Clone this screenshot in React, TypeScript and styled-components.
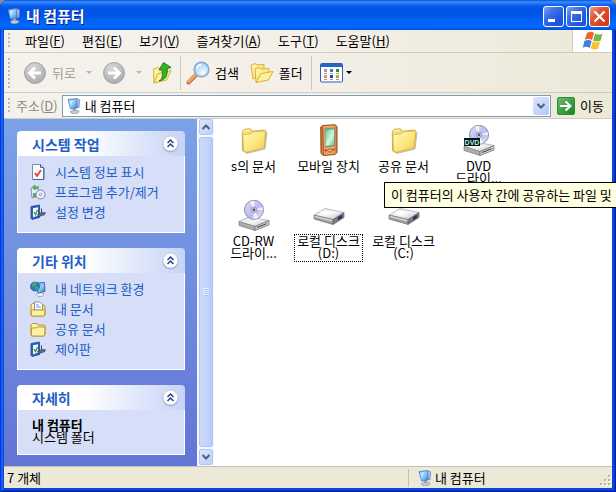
import React from "react";
import styled, { createGlobalStyle, css } from "styled-components";

const GlobalStyle = createGlobalStyle`
  *, *::before, *::after { box-sizing: border-box; }
  html, body { margin: 0; height: 100%; overflow: hidden; background: #8b9098; }
  #root { height: 100%; }
  body, button, input {
    font-family: "Noto Sans CJK KR", "Liberation Sans", sans-serif;
    font-size: 13px;
    line-height: 16px;
    color: #000;
  }
  button {
    margin: 0;
    padding: 0;
    border: 0;
    background: none;
    cursor: default;
  }
  svg { display: block; flex: none; }
`;

/* ---------- window frame ---------- */

const Window = styled.main`
  display: flex;
  flex-direction: column;
  height: 100vh;
  overflow: hidden;
  padding: 0 4px 4px;
  border-radius: 8px 8px 0 0;
  background: #0549dd;
  box-shadow: inset 1px 0 #0831d9, inset -1px -1px #001ea0, inset 3px 0 #1663ee, inset -2px -2px #0736c4;
`;

const TitleBar = styled.header`
  display: flex;
  align-items: center;
  flex: none;
  gap: 4px;
  height: 30px;
  margin: 0 -4px;
  padding: 2px 6px 0 6px;
  background: linear-gradient(#0a52d8 0, #3a8dff 2px, #0a62f0 5px, #0054e4 9px, #0056e8 16px, #0065fb 22px, #0066ff 27px, #0050d8 30px);
`;

const WindowTitle = styled.h1`
  flex: 1;
  margin: 0;
  font-size: 15px;
  line-height: 20px;
  font-weight: 700;
  color: #fff;
  text-shadow: 1px 1px #0a1f84;
`;

const TitleButtons = styled.div`
  display: flex;
  gap: 2px;
`;

const TitleButton = styled.button<{ $close?: boolean }>`
  width: 21px;
  height: 21px;
  border: 1px solid #fff;
  border-radius: 3px;
  background: ${(p) =>
    p.$close
      ? "linear-gradient(135deg, #f0a08a, #e2573a 35%, #d9431f 70%, #c53a1c)"
      : "linear-gradient(135deg, #7da4f5, #3a6fe8 35%, #2158dc 70%, #1b50d4)"};
`;

/* ---------- bars ---------- */

const barFill = css`
  display: flex;
  align-items: center;
  flex: none;
  border-bottom: 1px solid #d0cdbc;
  background: linear-gradient(90deg, #f5f2ee, #f4efe8 50%, #ece9d8);
`;

const Grip = styled.span<{ $tall?: boolean }>`
  flex: none;
  width: 2px;
  height: ${(p) => (p.$tall ? 30 : 16)}px;
  background: repeating-linear-gradient(#bdb9a8 0 2px, transparent 2px 4px);
`;

const MenuBar = styled.nav`
  ${barFill}
  height: 23px;
  padding-left: 4px;
`;

const MenuList = styled.div`
  display: flex;
  flex: 1;
  gap: 17px;
  padding-left: 15px;
  white-space: nowrap;
`;

const LogoCell = styled.div`
  display: flex;
  align-items: center;
  justify-content: center;
  align-self: stretch;
  width: 40px;
  border-left: 1px solid #d0cdbc;
  background: #fff;
`;

const ToolBar = styled.div`
  ${barFill}
  height: 40px;
  padding-left: 4px;
`;

const ToolGroup = styled.div<{ $gap: number; $left: number; $right: number }>`
  display: flex;
  align-items: center;
  gap: ${(p) => p.$gap}px;
  padding: 0 ${(p) => p.$right}px 0 ${(p) => p.$left}px;
`;

const ToolButton = styled.button<{ $tight?: boolean }>`
  display: flex;
  align-items: center;
  gap: ${(p) => (p.$tight ? 2 : 5)}px;
  white-space: nowrap;
  &:disabled { color: #a3a095; }
`;

const Divider = styled.span`
  width: 1px;
  height: 34px;
  background: #cbc8b8;
`;

const Arrow = styled.span<{ $dim?: boolean }>`
  border: 3px solid transparent;
  border-top-color: ${(p) => (p.$dim ? "#b9b6aa" : "#000")};
  border-bottom: 0;
`;

const AddressBar = styled.form`
  ${barFill}
  height: 26px;
  padding: 0 8px 0 4px;
`;

const AddressLabel = styled.label`
  padding: 0 4px 0 6px;
  color: #8a887c;
  white-space: nowrap;
`;

const AddressField = styled.div`
  display: flex;
  align-items: center;
  flex: 1;
  gap: 3px;
  min-width: 0;
  height: 22px;
  padding: 0 1px 0 3px;
  border: 1px solid #7f9db9;
  background: #fff;
`;

const AddressInput = styled.input`
  flex: 1;
  min-width: 0;
  padding: 0;
  border: 0;
  outline: 0;
  background: transparent;
`;

const DropButton = styled.button`
  display: grid;
  place-items: center;
  width: 16px;
  height: 18px;
  border-radius: 2px;
  background: linear-gradient(135deg, #dce6fd, #b4c8f6);
`;

const GoButton = styled(ToolButton)`
  margin-left: 6px;
`;

/* ---------- task pane ---------- */

const Body = styled.div`
  display: flex;
  flex: 1;
  min-height: 0;
  background: #fff;
`;

const TaskPane = styled.aside`
  display: flex;
  flex-direction: column;
  flex: 0 0 193px;
  gap: 15px;
  overflow: hidden;
  padding: 12px 12px 0 13px;
  background: linear-gradient(#7ba2e7, #6375d6);
`;

const PanelHead = styled.div`
  display: flex;
  align-items: center;
  justify-content: space-between;
  height: 25px;
  padding: 0 6px 0 15px;
  border-radius: 4px 4px 0 0;
  background: linear-gradient(90deg, #fff 40%, #c6d3f7);
`;

const PanelTitle = styled.h2`
  margin: 0;
  font-size: 14px;
  line-height: 16px;
  font-weight: 700;
  color: #215dc6;
`;

const PanelLinks = styled.ul`
  margin: 0;
  padding: 6px 0 10px 12px;
  border: 1px solid #fff;
  border-top: 0;
  background: #d6dff7;
  list-style: none;
`;

const PanelLink = styled.a`
  display: flex;
  align-items: center;
  gap: 9px;
  height: 20px;
  color: #215dc6;
  text-decoration: none;
  white-space: nowrap;
`;

const PanelDetails = styled.p`
  margin: 0;
  padding: 9px 14px 11px;
  border: 1px solid #fff;
  border-top: 0;
  background: #d6dff7;
  line-height: 12px;
  strong { display: block; }
`;

const ScrollBar = styled.div`
  display: flex;
  flex-direction: column;
  flex: none;
  gap: 2px;
  width: 17px;
  padding: 0 1px 1px 2px;
  background: #f7f8fe;
`;

const ScrollButton = styled.button`
  display: grid;
  place-items: center;
  height: 16px;
  border: 1px solid #b4c6f2;
  border-radius: 2px;
  background: linear-gradient(135deg, #dce6fd, #bccffa);
`;

const ScrollThumb = styled.div`
  display: grid;
  place-items: center;
  flex: 1;
  border: 1px solid #b4c6f2;
  border-radius: 2px;
  background: linear-gradient(90deg, #cbd9fd, #c4d4fc 60%, #b8cafa);
`;

/* ---------- files ---------- */

const Files = styled.section`
  position: relative;
  flex: 1;
  min-width: 0;
  padding: 1px 2px;
  margin-right: -4px;
`;

const FileGrid = styled.div`
  display: grid;
  grid-template-columns: repeat(4, 75px);
  grid-auto-rows: 75px;
`;

const FileButton = styled.button`
  display: flex;
  flex-direction: column;
  align-items: center;
  gap: 3px;
  padding-top: 4px;
`;

const FileName = styled.span<{ $focused?: boolean }>`
  display: flex;
  flex-direction: column;
  padding: 0 2px 2px;
  border: 1px ${(p) => (p.$focused ? "dotted #000" : "solid transparent")};
  line-height: 12px;
  white-space: nowrap;
`;

const Tooltip = styled.div`
  position: absolute;
  top: 63px;
  left: 170px;
  right: 0;
  height: 26px;
  overflow: hidden;
  padding: 4px 6px;
  border: 1px solid #000;
  border-right: 0;
  background: #ffffe1;
  white-space: nowrap;
`;

/* ---------- status bar ---------- */

const StatusBar = styled.footer`
  display: flex;
  align-items: center;
  flex: none;
  height: 22px;
  border-top: 1px solid #c4c1b0;
  background: #ece9d8;
`;

const StatusCell = styled.div<{ $place?: boolean }>`
  display: flex;
  align-items: center;
  gap: 2px;
  flex: ${(p) => (p.$place ? "0 0 204px" : "1")};
  height: 18px;
  padding-left: ${(p) => (p.$place ? 8 : 3)}px;
  border-left: ${(p) => (p.$place ? "1px solid #c4c1b0" : "0")};
  svg:last-child { margin-left: auto; align-self: flex-end; }
`;

/* ---------- drawings ---------- */

const Gradients = () => (
  <svg width="0" height="0" aria-hidden="true">
    <defs>
      <linearGradient id="folder" x1="0" y1="0" x2="1" y2="1">
        <stop offset="0" stopColor="#fffbc0" />
        <stop offset=".5" stopColor="#fde983" />
        <stop offset="1" stopColor="#f0cb52" />
      </linearGradient>
      <linearGradient id="disc" x1="0" y1="0" x2="1" y2="1">
        <stop offset="0" stopColor="#dcdff6" />
        <stop offset=".35" stopColor="#c4c8f2" />
        <stop offset=".6" stopColor="#b9bdf2" />
        <stop offset="1" stopColor="#e8eaff" />
      </linearGradient>
      <linearGradient id="metal" x1="0" y1="0" x2="1" y2="1">
        <stop offset="0" stopColor="#e2e2e2" />
        <stop offset=".5" stopColor="#f6f6f6" />
        <stop offset="1" stopColor="#bcbcbe" />
      </linearGradient>
      <linearGradient id="screen" x1="0" y1="0" x2="1" y2="1">
        <stop offset="0" stopColor="#3f8ce8" />
        <stop offset=".5" stopColor="#8cd0ff" />
        <stop offset="1" stopColor="#2f70d8" />
      </linearGradient>
      <linearGradient id="pda" x1="0" y1="0" x2="1" y2="0">
        <stop offset="0" stopColor="#c8682a" />
        <stop offset=".2" stopColor="#f4a058" />
        <stop offset=".8" stopColor="#f0a45c" />
        <stop offset="1" stopColor="#c8702c" />
      </linearGradient>
      <linearGradient id="pdaScreen" x1="0" y1="0" x2="1" y2="1">
        <stop offset="0" stopColor="#5cc8a0" />
        <stop offset=".5" stopColor="#c4f3d8" />
        <stop offset="1" stopColor="#6bd0a0" />
      </linearGradient>
      <radialGradient id="grey" cx=".4" cy=".3" r=".7">
        <stop offset="0" stopColor="#dadada" />
        <stop offset="1" stopColor="#acacac" />
      </radialGradient>
      <radialGradient id="lens" cx=".6" cy=".7" r=".7">
        <stop offset="0" stopColor="#f4fcff" />
        <stop offset="1" stopColor="#9fd2f6" />
      </radialGradient>
      <linearGradient id="go" x1="0" y1="0" x2="1" y2="1">
        <stop offset="0" stopColor="#6cc06c" />
        <stop offset="1" stopColor="#16821c" />
      </linearGradient>
    </defs>
  </svg>
);

const ComputerIcon = () => (
  <svg width="16" height="16" viewBox="0 0 16 16" aria-hidden="true">
    <path d="M4.500 13.500l3-2 5.500 1.500-1 2-4 1-3-1z" fill="#c9cbd0" stroke="#85899a" strokeWidth=".6" />
    <path d="M7 10h3v3H7z" fill="#9aa3b8" />
    <path d="M2 1.500l8.500-1 1 9.300-7 1.200z" fill="url(#screen)" stroke="#4a7cc8" strokeWidth=".7" />
    <path d="M10.500.5l3.200 1.300-.7 8-1.500-.1z" fill="#a9bfe4" stroke="#5a79b0" strokeWidth=".6" />
    <path d="M3 2.500l5-.6-3.600 6z" fill="#d4eeff" opacity=".85" />
  </svg>
);

const WindowsLogo = () => (
  <svg width="22" height="20" viewBox="0 0 22 20" aria-hidden="true">
    <path d="M5 2c3-1.700 5-1.300 7 0l-2 7c-2-1.400-4.500-1.500-7.200-.2z" fill="#f0642c" />
    <path d="M13 2.500c2 1.300 4.500 1.500 7.500.2l-2 7c-2.800 1.200-5.200 1-7.400-.3z" fill="#74b743" />
    <path d="M2.500 9.800c2.800-1.300 5-1.100 7.200.2l-2 7c-2-1.400-4.400-1.500-7-.3z" fill="#3f80dc" />
    <path d="M10.700 10.500c2.200 1.200 4.600 1.400 7.400.2l-2 7c-2.800 1.200-5.200 1-7.400-.3z" fill="#f8c22c" />
  </svg>
);

const CircleArrow = ({ forward }: { forward?: boolean }) => (
  <svg width="24" height="24" viewBox="0 0 24 24" aria-hidden="true">
    <circle cx="12" cy="12" r="10.500" fill="url(#grey)" stroke="#a6a6a6" />
    <path
      d={forward ? "M6 12h11M12 6.500l5.500 5.500-5.500 5.500" : "M18 12H7M12 6.500L6.500 12l5.500 5.500"}
      fill="none" stroke="#fff" strokeWidth="2.800"
    />
  </svg>
);

const UpFolder = () => (
  <svg width="20" height="24" viewBox="0 0 20 24" aria-hidden="true">
    <path d="M1.500 8l5-1.500L8 8l7-1v11L2 22z" fill="url(#folder)" stroke="#dcb03a" />
    <path d="M2 22l3.500-9 13.500-3.500L14.500 19z" fill="#fdf0a0" stroke="#dcb03a" />
    <path d="M7 20c3.500-1.500 4-5.500 3-11L7 9l4.500-7.500L19 6.500l-4 1.200C16 14 13.500 19 7 20z" fill="#3bb02c" stroke="#1d8418" />
  </svg>
);

const SearchIcon = () => (
  <svg width="24" height="24" viewBox="0 0 24 24" aria-hidden="true">
    <path d="M2.500 21.500l7-7" stroke="#b0683a" strokeWidth="4" strokeLinecap="round" />
    <path d="M2.500 21l7-7" stroke="#f0a868" strokeWidth="2.500" strokeLinecap="round" />
    <circle cx="15.500" cy="8.500" r="7.300" fill="url(#lens)" stroke="#86a8d8" strokeWidth="1.600" />
    <path d="M11 8c0-3 2-4.500 4.500-4.500" fill="none" stroke="#fff" strokeWidth="1.500" />
  </svg>
);

const FoldersIcon = () => (
  <svg width="24" height="22" viewBox="0 0 24 22" aria-hidden="true">
    <path d="M1 3l4-1.500L7 3l7-.5V12L3 17z" fill="url(#folder)" stroke="#dcb03a" />
    <path d="M5 7l4-1.500 2 1.500 8-.5V17L6 20z" fill="url(#folder)" stroke="#dcb03a" />
    <path d="M6 20.500l5-9 12-2L18.500 18z" fill="#fdf0a0" stroke="#dcb03a" />
  </svg>
);

const ViewsIcon = () => (
  <svg width="24" height="20" viewBox="0 0 24 20" aria-hidden="true">
    <rect x=".5" y=".5" width="22" height="18.500" rx="1" fill="#fff" stroke="#2a5fb4" />
    <path d="M1 1h21v3H1z" fill="#2467c8" />
    {["#b58fb4", "#3a78d8", "#2f8a2c"].map((c, i) => (
      <rect key={c} x={4 + i * 6} y="6" width="3" height="3" fill={c} />
    ))}
    {["#ee8a6a", "#1d3fae", "#c8a820"].map((c, i) => (
      <rect key={c} x={4 + i * 6} y="12" width="3" height="3" fill={c} />
    ))}
    <path d="M4 10.500h3m3 0h3m3 0h3M4 16.500h3m3 0h3m3 0h3" stroke="#9a9aa8" />
  </svg>
);

const GoIcon = () => (
  <svg width="18" height="18" viewBox="0 0 18 18" aria-hidden="true">
    <rect x=".5" y=".5" width="17" height="17" rx="1.500" fill="url(#go)" stroke="#2d8a36" />
    <path d="M3 9h10M8.500 4.500L13.500 9l-5 4.500" fill="none" stroke="#fff" strokeWidth="2" />
  </svg>
);

const Chevron = ({ up }: { up?: boolean }) => (
  <svg width="10" height="8" viewBox="0 0 10 8" aria-hidden="true">
    <path d={up ? "M1.500 6L5 2.500 8.500 6" : "M1.500 2L5 5.500 8.500 2"} fill="none" stroke="#4d6185" strokeWidth="2" />
  </svg>
);

const CollapseIcon = () => (
  <svg width="17" height="18" viewBox="0 0 17 18" aria-hidden="true">
    <circle cx="8.500" cy="9.500" r="8" fill="#a9b4d4" />
    <circle cx="8.500" cy="8.500" r="7.500" fill="#fff" stroke="#c3cbe2" />
    <path d="M5.500 8l3-3 3 3M5.500 12l3-3 3 3" fill="none" stroke="#26428b" strokeWidth="1.500" />
  </svg>
);

const DocumentCheck = () => (
  <svg width="16" height="16" viewBox="0 0 16 16" aria-hidden="true">
    <path d="M2.500.5h8l3 3v12h-11z" fill="#fbfcff" stroke="#7a8bb0" />
    <path d="M10.500.5v3h3M14 4v11.500H3" fill="none" stroke="#4c5f86" />
    <path d="M5 9l2 3 4-6" fill="none" stroke="#e0402c" strokeWidth="1.800" />
  </svg>
);

const ProgramsIcon = () => (
  <svg width="16" height="16" viewBox="0 0 16 16" aria-hidden="true">
    <path d="M1 4l7-1 1 9-7 2z" fill="#e4eefc" stroke="#7f95b5" />
    <path d="M2 3l3-2.500L6 3l3-1.500L8 5 4 6z" fill="#59ac60" />
    <circle cx="10.500" cy="10.500" r="4.500" fill="#eceefa" stroke="#7a82a0" />
    <circle cx="10.500" cy="10.500" r="1.200" fill="#fff" stroke="#8a90b0" />
    <path d="M3 9h3v4H3z" fill="#62a65a" />
  </svg>
);

const SettingsIcon = () => (
  <svg width="16" height="16" viewBox="0 0 16 16" aria-hidden="true">
    <path d="M1 2.500L9.500 1v12.500L2 15.500l-1-1z" fill="#2a62c0" stroke="#1d4890" strokeWidth=".8" />
    <path d="M3 4.200l5-1v8.600l-5 1.400z" fill="#f2f9ff" />
    <path d="M4 8l1.500 2.500L7.500 6" fill="none" stroke="#3aa03c" strokeWidth="1.400" />
    <path d="M7.500 10.500l4-2 4 .2-1 2-3 1-3 1z" fill="#5d6b8c" stroke="#28324c" strokeWidth=".6" />
    <path d="M11.500 4.500v4" stroke="#38445f" />
  </svg>
);

const NetworkIcon = () => (
  <svg width="16" height="16" viewBox="0 0 16 16" aria-hidden="true">
    <path d="M6 13l4-1.500 4 1-1.500 3H8z" fill="#f0f0f4" stroke="#8b92a4" strokeWidth=".6" />
    <path d="M6 2l8.500-.5.5 9-7 1.500z" fill="url(#screen)" stroke="#2c5aa8" strokeWidth=".8" />
    <circle cx="5" cy="5.500" r="4.500" fill="#2f74d0" stroke="#1f549c" strokeWidth=".7" />
    <path d="M2 3l3-2 2 1-1 2.500L3 6zM5 6l3-.5.5 2L6 9.500z" fill="#44b058" />
  </svg>
);

const SmallFolder = ({ paper }: { paper?: boolean }) => (
  <svg width="16" height="16" viewBox="0 0 16 16" aria-hidden="true">
    <path d="M1 4l1.500-1.500h4L8 4h6l1 1v9l-1 1H2l-1-1z" fill="url(#folder)" stroke="#b8902a" />
    {paper && <path d="M4.500 9V1h5l3 2.500V9z" fill="#fff" stroke="#7f94ba" />}
    {paper && <path d="M6 4h3M6 6h5" stroke="#6f9ad8" />}
    <path d={paper ? "M1 9h14l-.5 6h-13z" : "M1.500 7H6l1.500-1H15l-.5 9h-13z"} fill="#fef1a4" stroke="#c39b34" />
  </svg>
);

const BigFolder = () => (
  <svg width="32" height="32" viewBox="0 0 32 32" aria-hidden="true">
    <path d="M8.500 29.500L27 25l2-17" fill="none" stroke="#8c8c84" opacity=".6" />
    <path d="M4.300 7.500l2-2.200 6.200-.5 2 2.500 12-1.300 1.500 1.700L26.300 24 8 28.700l-3.500-2z" fill="#f8de72" stroke="#cfab48" />
    <path d="M5 12l1-1.500L13 10l2-2 12.500-1.200L26 24 8 28.300 5.500 26z" fill="url(#folder)" stroke="#d9b650" strokeWidth=".8" />
    <path d="M6 8l1-1.500 5-.4" fill="none" stroke="#fffde0" />
  </svg>
);

const PdaIcon = () => (
  <svg width="32" height="32" viewBox="0 0 32 32" aria-hidden="true">
    <path d="M7.700 3l2-1.500L22 .7 24 2.500v26L22 30.500 10.500 31.500 8 29.500z" fill="url(#pda)" stroke="#8c501c" />
    <path d="M9.500 3l1 28" stroke="#a85820" />
    <path d="M11.500 4.500L22 3.500v18.500L12 23.500z" fill="#7c9488" />
    <path d="M12.500 6l8.500-.8v15.600l-8.500 1.200z" fill="url(#pdaScreen)" />
    <path d="M12.500 21L21 7v5l-5.500 9.500z" fill="#fff" opacity=".35" />
    <path d="M12 26.500l2-.2m5.500-.6l2-.2" stroke="#7c421a" strokeWidth="1.500" />
    <ellipse cx="16.800" cy="26.500" rx="1.800" ry="1.500" fill="#f8d4a0" stroke="#8c4c1c" strokeWidth=".8" />
  </svg>
);

const OpticalDrive = ({ dvd }: { dvd?: boolean }) => (
  <svg width="32" height="32" viewBox="0 0 32 32" aria-hidden="true">
    <path d="M1 22.500l10-4.500 20 3.500-14 6z" fill="url(#metal)" stroke="#a0a0a0" strokeWidth=".7" />
    <path d="M1 22.500l16 5v4l-16-5z" fill="#acacae" stroke="#7c7c7c" strokeWidth=".7" />
    <path d="M17 27.500l14-6V26l-14 5.500z" fill="#c8c8ca" stroke="#6c6c6c" strokeWidth=".7" />
    <path d="M19 28.500l9.500-3.800" stroke="#444" />
    <circle cx="16" cy="10.800" r="9.500" fill="url(#disc)" stroke="#8c8ca4" />
    <path d="M16 11l-4-8.500 4.500-1zM16 11l4.500 8-5 1zM16 11L24.500 8l.5 3z" fill="#fff" opacity=".75" />
    <circle cx="16" cy="10.800" r="2.800" fill="#c8c8dc" stroke="#9494b4" strokeWidth=".8" />
    <circle cx="16" cy="10.800" r="1.300" fill="#4c4c5c" />
    {dvd && <rect x="1" y="14" width="16" height="8" fill="#041414" />}
    {dvd && (
      <text x="9" y="21" textAnchor="middle" fontFamily="Liberation Sans" fontWeight="700" fontSize="7" fill="#a8f4ee">
        DVD
      </text>
    )}
  </svg>
);

const HardDisk = () => (
  <svg width="32" height="32" viewBox="0 0 32 32" aria-hidden="true">
    <path d="M1 16l11-6.500 19 4L20 20.500z" fill="url(#metal)" stroke="#a8a8a8" strokeWidth=".7" />
    <path d="M1 16l19 4.500v5L1 20z" fill="#a6a6a8" stroke="#7c7c7c" strokeWidth=".7" />
    <path d="M20 20.500l11-7v5l-11 7z" fill="#7a7a7e" stroke="#666" strokeWidth=".7" />
    <path d="M25 18.300l4-2.500v3l-4 2.500z" fill="#2c2c68" />
    <path d="M2 17.500l17 4.200" stroke="#e4e4e4" />
    <path d="M2 19.800l17 4.700" stroke="#8c8c8c" />
    <ellipse cx="12" cy="13.800" rx="5" ry="2" fill="#fff" />
  </svg>
);

const GripLines = () => (
  <svg width="6" height="8" viewBox="0 0 6 8" aria-hidden="true">
    <path d="M0 .5h6M0 2.500h6M0 4.500h6M0 6.500h6" stroke="#eef4fe" />
    <path d="M1 1.500h5M1 3.500h5M1 5.500h5M1 7.500h5" stroke="#a8c2fa" />
  </svg>
);

const SizeGrip = () => (
  <svg width="13" height="13" viewBox="0 0 13 13" aria-hidden="true">
    {[[9, 1], [5, 5], [9, 5], [1, 9], [5, 9], [9, 9]].map(([x, y]) => (
      <g key={`${x}-${y}`}>
        <rect x={x + 1} y={y + 1} width="2" height="2" fill="#fff" />
        <rect x={x} y={y} width="2" height="2" fill="#b8b4a2" />
      </g>
    ))}
  </svg>
);

/* ---------- content ---------- */

const menus = [
  ["파일", "F"], ["편집", "E"], ["보기", "V"], ["즐겨찾기", "A"], ["도구", "T"], ["도움말", "H"],
];

const panels = [
  {
    title: "시스템 작업",
    links: [
      { label: "시스템 정보 표시", icon: <DocumentCheck /> },
      { label: "프로그램 추가/제거", icon: <ProgramsIcon /> },
      { label: "설정 변경", icon: <SettingsIcon /> },
    ],
  },
  {
    title: "기타 위치",
    links: [
      { label: "내 네트워크 환경", icon: <NetworkIcon /> },
      { label: "내 문서", icon: <SmallFolder paper /> },
      { label: "공유 문서", icon: <SmallFolder /> },
      { label: "제어판", icon: <SettingsIcon /> },
    ],
  },
];

const files = [
  { lines: ["s의 문서"], icon: <BigFolder /> },
  { lines: ["모바일 장치"], icon: <PdaIcon /> },
  { lines: ["공유 문서"], icon: <BigFolder /> },
  { lines: ["DVD", "드라이..."], icon: <OpticalDrive dvd /> },
  { lines: ["CD-RW", "드라이..."], icon: <OpticalDrive /> },
  { lines: ["로컬 디스크", "(D:)"], icon: <HardDisk />, focused: true },
  { lines: ["로컬 디스크", "(C:)"], icon: <HardDisk /> },
];

const PanelHeader = ({ title }: { title: string }) => (
  <PanelHead>
    <PanelTitle>{title}</PanelTitle>
    <button type="button" aria-label={title}><CollapseIcon /></button>
  </PanelHead>
);

export default function App() {
  return (
    <>
      <GlobalStyle />
      <Gradients />
      <Window>
        <TitleBar>
          <ComputerIcon />
          <WindowTitle>내 컴퓨터</WindowTitle>
          <TitleButtons>
            <TitleButton aria-label="최소화">
              <svg width="19" height="19" viewBox="0 0 19 19"><path d="M4 12h7v3H4z" fill="#fff" /></svg>
            </TitleButton>
            <TitleButton aria-label="최대화">
              <svg width="19" height="19" viewBox="0 0 19 19"><path d="M4 4h11v11H4zM5 7v7h9V7z" fill="#fff" fillRule="evenodd" /></svg>
            </TitleButton>
            <TitleButton $close aria-label="닫기">
              <svg width="19" height="19" viewBox="0 0 19 19"><path d="M4.500 4.500l10 10m0-10l-10 10" stroke="#fff" strokeWidth="2.200" /></svg>
            </TitleButton>
          </TitleButtons>
        </TitleBar>

        <MenuBar>
          <Grip />
          <MenuList>
            {menus.map(([name, key]) => (
              <button key={key} type="button">{name}(<u>{key}</u>)</button>
            ))}
          </MenuList>
          <LogoCell><WindowsLogo /></LogoCell>
        </MenuBar>

        <ToolBar>
          <Grip $tall />
          <ToolGroup $gap={10} $left={13} $right={8}>
            <ToolButton disabled><CircleArrow />뒤로</ToolButton>
            <Arrow $dim />
            <ToolButton disabled aria-label="앞으로"><CircleArrow forward /></ToolButton>
            <Arrow $dim />
            <ToolButton aria-label="위로"><UpFolder /></ToolButton>
          </ToolGroup>
          <Divider />
          <ToolGroup $gap={11} $left={5} $right={8}>
            <ToolButton><SearchIcon />검색</ToolButton>
            <ToolButton><FoldersIcon />폴더</ToolButton>
          </ToolGroup>
          <Divider />
          <ToolGroup $gap={10} $left={8} $right={8}>
            <ToolButton $tight aria-label="보기"><ViewsIcon /><Arrow /></ToolButton>
          </ToolGroup>
        </ToolBar>

        <AddressBar onSubmit={(e) => e.preventDefault()}>
          <Grip />
          <AddressLabel htmlFor="address">주소(<u>D</u>)</AddressLabel>
          <AddressField>
            <ComputerIcon />
            <AddressInput id="address" defaultValue="내 컴퓨터" />
            <DropButton type="button" aria-label="주소 목록"><Chevron /></DropButton>
          </AddressField>
          <GoButton type="submit"><GoIcon />이동</GoButton>
        </AddressBar>

        <Body>
          <TaskPane>
            {panels.map((panel) => (
              <section key={panel.title}>
                <PanelHeader title={panel.title} />
                <PanelLinks>
                  {panel.links.map((link) => (
                    <li key={link.label}>
                      <PanelLink href="#">{link.icon}{link.label}</PanelLink>
                    </li>
                  ))}
                </PanelLinks>
              </section>
            ))}
            <section>
              <PanelHeader title="자세히" />
              <PanelDetails><strong>내 컴퓨터</strong>시스템 폴더</PanelDetails>
            </section>
          </TaskPane>
          <ScrollBar>
            <ScrollButton aria-label="위로 스크롤"><Chevron up /></ScrollButton>
            <ScrollThumb><GripLines /></ScrollThumb>
            <ScrollButton aria-label="아래로 스크롤"><Chevron /></ScrollButton>
          </ScrollBar>
          <Files>
            <FileGrid>
              {files.map((file, i) => (
                <FileButton key={i} type="button">
                  {file.icon}
                  <FileName $focused={file.focused}>
                    {file.lines.map((line) => <span key={line}>{line}</span>)}
                  </FileName>
                </FileButton>
              ))}
            </FileGrid>
            <Tooltip role="tooltip">이 컴퓨터의 사용자 간에 공유하는 파일 및</Tooltip>
          </Files>
        </Body>

        <StatusBar>
          <StatusCell>7 개체</StatusCell>
          <StatusCell $place><ComputerIcon />내 컴퓨터<SizeGrip /></StatusCell>
        </StatusBar>
      </Window>
    </>
  );
}
